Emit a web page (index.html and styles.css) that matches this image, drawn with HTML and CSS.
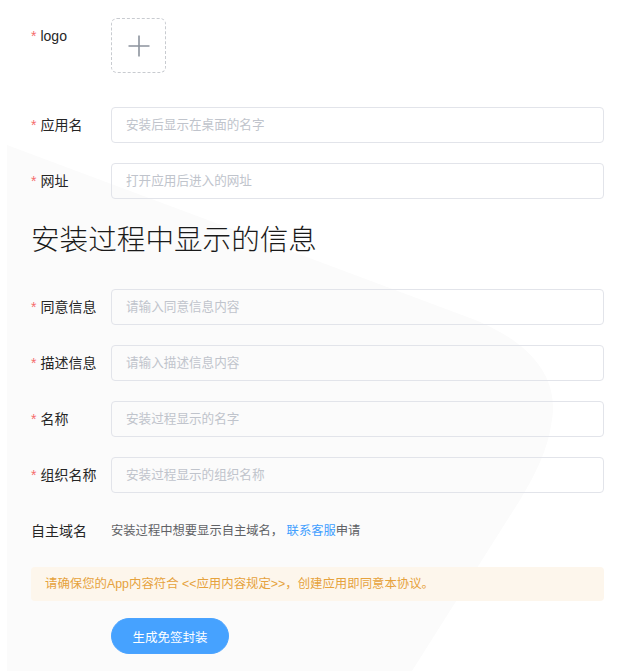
FILE: index.html
```html
<!DOCTYPE html>
<html lang="zh-CN">
<head>
<meta charset="utf-8">
<title>安装过程中显示的信息</title>
<link rel="stylesheet" href="styles.css">
</head>
<body>
<div class="page">
  <svg class="bg-shape" width="643" height="672" viewBox="0 0 643 672" aria-hidden="true">
    <path d="M7,145 L470,318 C520,337 560,370 552,420 C548,450 535,475 520,500 L412,671 L7,671 Z" fill="#fbfbfb"/>
  </svg>
  <form class="form">
    <div class="item item-logo">
      <label class="label req">logo</label>
      <div class="upload">
        <svg width="22" height="22" viewBox="0 0 22 22" aria-hidden="true">
          <path d="M11 0.5 V21.5 M0.5 11 H21.5" stroke="#8c939d" stroke-width="1.6" fill="none"/>
        </svg>
      </div>
    </div>
    <div class="item">
      <label class="label req">应用名</label>
      <input class="input" type="text" placeholder="安装后显示在桌面的名字">
    </div>
    <div class="item">
      <label class="label req">网址</label>
      <input class="input" type="text" placeholder="打开应用后进入的网址">
    </div>

    <h2 class="section-title">安装过程中显示的信息</h2>

    <div class="item">
      <label class="label req">同意信息</label>
      <input class="input" type="text" placeholder="请输入同意信息内容">
    </div>
    <div class="item">
      <label class="label req">描述信息</label>
      <input class="input" type="text" placeholder="请输入描述信息内容">
    </div>
    <div class="item">
      <label class="label req">名称</label>
      <input class="input" type="text" placeholder="安装过程显示的名字">
    </div>
    <div class="item">
      <label class="label req">组织名称</label>
      <input class="input" type="text" placeholder="安装过程显示的组织名称">
    </div>
    <div class="item item-domain">
      <label class="label">自主域名</label>
      <div class="desc">安装过程中想要显示自主域名， <a class="link" href="#">联系客服</a>申请</div>
    </div>

    <div class="alert">请确保您的App内容符合 &lt;&lt;应用内容规定&gt;&gt;，创建应用即同意本协议。</div>

    <div class="actions">
      <button class="btn" type="button">生成免签封装</button>
    </div>
  </form>
</div>
</body>
</html>
```
FILE: styles.css
```css
* { box-sizing: border-box; }

html, body {
  margin: 0;
  padding: 0;
  background: #ffffff;
}

body {
  font-family: "Liberation Sans", "Noto Sans CJK SC", sans-serif;
  color: #303133;
}

.page {
  position: relative;
  width: 643px;
  height: 672px;
  overflow: hidden;
}

.bg-shape {
  position: absolute;
  left: 0;
  top: 0;
  z-index: 0;
}

.form {
  position: relative;
  z-index: 1;
  padding: 18px 39px 0 31px;
  margin: 0;
}

.item {
  display: flex;
  align-items: flex-start;
  margin-bottom: 20px;
}

.item-logo {
  margin-bottom: 34px;
}

.label {
  width: 80px;
  flex: 0 0 80px;
  font-size: 14px;
  line-height: 36px;
  height: 36px;
  color: #262626;
  white-space: nowrap;
}

.label.req::before {
  content: "*";
  color: #f56c6c;
  margin-right: 4px;
  font-size: 14px;
}

.upload {
  width: 55px;
  height: 55px;
  border: 1px dashed #c8cbd0;
  border-radius: 6px;
  display: flex;
  align-items: center;
  justify-content: center;
}

.input {
  flex: 1;
  height: 36px;
  border: 1px solid #e2e4ea;
  border-radius: 4px;
  background: transparent;
  padding: 0 14px;
  font-family: "Liberation Sans", "Noto Sans CJK SC", sans-serif;
  font-size: 12.6px;
  color: #606266;
  outline: none;
}

.input::placeholder {
  color: #c0c4cc;
}

.section-title {
  margin: 21px 0 29px 0;
  font-size: 28.6px;
  line-height: 40px;
  font-weight: 300;
  color: #1a1a1a;
}

.item-domain {
  margin-bottom: 18px;
}

.desc {
  font-size: 12.3px;
  line-height: 36px;
  color: #606266;
}

.link {
  color: #409eff;
  text-decoration: none;
}

.alert {
  background: #fdf6ec;
  color: #e6a23c;
  border-radius: 4px;
  padding: 8px 14px;
  font-size: 12.4px;
  line-height: 18px;
  height: 34px;
}

.actions {
  padding-left: 80px;
  margin-top: 17px;
}

.btn {
  width: 118px;
  height: 36px;
  border: 1px solid #4aa3ff;
  border-radius: 18px;
  background: #46a2ff;
  color: #ffffff;
  font-family: "Liberation Sans", "Noto Sans CJK SC", sans-serif;
  font-size: 12.5px;
  padding: 0;
  cursor: pointer;
}
```
